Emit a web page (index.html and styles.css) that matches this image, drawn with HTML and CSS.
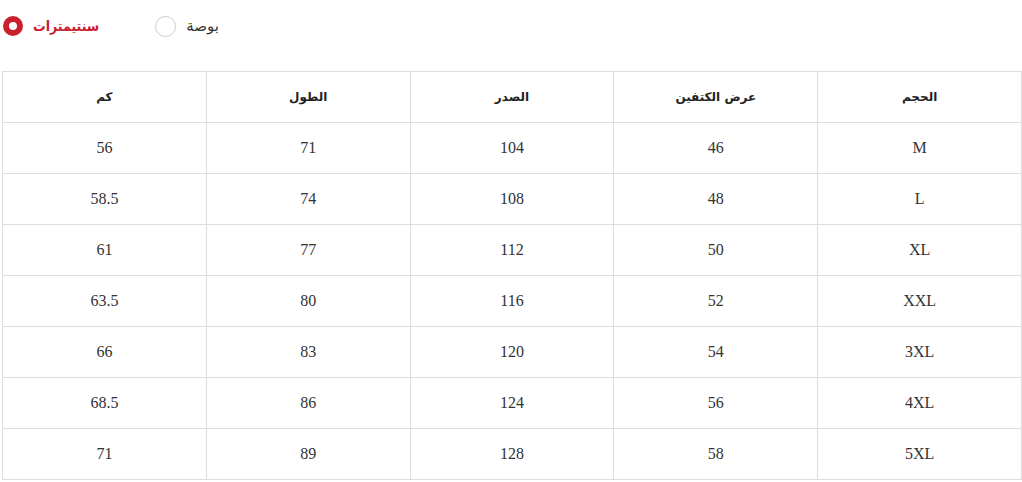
FILE: index.html
```html
<!DOCTYPE html>
<html lang="ar">
<head>
<meta charset="utf-8">
<link rel="stylesheet" href="styles.css">
</head>
<body>
<div class="units">
  <label class="unit unit-active"><span class="radio radio-on"></span><span class="unit-text">سنتيمترات</span></label>
  <label class="unit"><span class="radio"></span><span class="unit-text">بوصة</span></label>
</div>
<table class="size-table" dir="rtl">
  <thead>
    <tr><th>الحجم</th><th>عرض الكتفين</th><th>الصدر</th><th>الطول</th><th>كم</th></tr>
  </thead>
  <tbody>
    <tr><td>M</td><td>46</td><td>104</td><td>71</td><td>56</td></tr>
    <tr><td>L</td><td>48</td><td>108</td><td>74</td><td>58.5</td></tr>
    <tr><td>XL</td><td>50</td><td>112</td><td>77</td><td>61</td></tr>
    <tr><td>XXL</td><td>52</td><td>116</td><td>80</td><td>63.5</td></tr>
    <tr><td>3XL</td><td>54</td><td>120</td><td>83</td><td>66</td></tr>
    <tr><td>4XL</td><td>56</td><td>124</td><td>86</td><td>68.5</td></tr>
    <tr><td>5XL</td><td>58</td><td>128</td><td>89</td><td>71</td></tr>
  </tbody>
</table>
</body>
</html>
```
FILE: styles.css
```css
html, body { margin: 0; padding: 0; background: #fff; }
body { font-family: "Liberation Serif", "DejaVu Serif", serif; color: #333; }
.units {
  display: flex;
  align-items: center;
  gap: 56px;
  height: 52px;
  padding-left: 3px;
  margin-bottom: 19px;
}
.unit { display: flex; align-items: center; gap: 10px; cursor: pointer; }
.radio {
  box-sizing: border-box;
  width: 21px; height: 21px;
  border-radius: 50%;
  border: 1px solid #ccc;
  background: #fff;
}
.radio-on { width: 20px; height: 20px; border: 6px solid #c8202c; }
.unit-text {
  font-family: "DejaVu Sans", "Liberation Sans", sans-serif;
  font-size: 15px;
  color: #333;
}
.unit-active .unit-text {
  font-family: "DejaVu Sans Condensed", "DejaVu Sans", sans-serif;
  font-size: 14px;
  color: #c8202c;
  font-weight: bold;
}
.size-table {
  margin-left: 2px;
  width: 1020px;
  border-collapse: collapse;
  table-layout: fixed;
}
.size-table th, .size-table td {
  border: 1px solid #ddd;
  height: 50px;
  padding: 0;
  text-align: center;
  vertical-align: middle;
}
.size-table th {
  font-family: "DejaVu Sans", "Liberation Sans", sans-serif;
  font-size: 12px;
  font-weight: bold;
  color: #222;
}
.size-table td { font-size: 16px; color: #333; }
```
